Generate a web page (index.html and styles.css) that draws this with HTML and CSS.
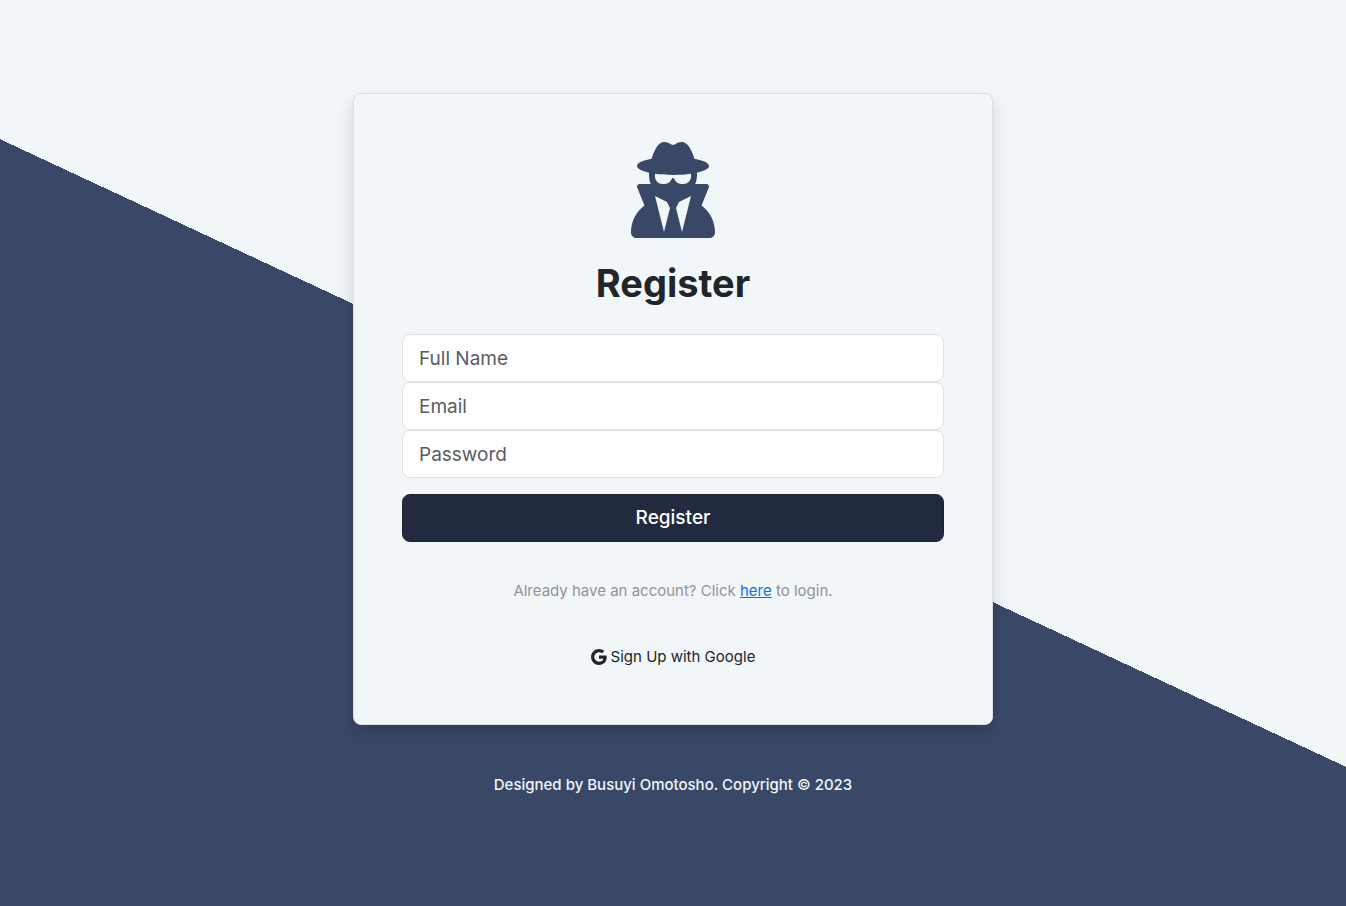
FILE: index.html
```
<!DOCTYPE html>
<html lang="en">
<head>
<meta charset="utf-8">
<meta name="viewport" content="width=device-width, initial-scale=1">
<title>Register</title>
<link rel="stylesheet" href="styles.css">
</head>
<body>
<div class="page">
  <main class="card">
    <svg class="logo" viewBox="0 0 448 512" aria-hidden="true"><path d="M224 16c-6.7 0-10.8-2.8-15.5-6.1C201.9 5.4 194 0 176 0c-30.5 0-52 43.7-66 89.4C62.7 98.1 32 112.2 32 128c0 14.3 25 27.1 64.6 35.9c-.4 4-.6 8-.6 12.1c0 17 3.3 33.2 9.3 48H45.4C38 224 32 230 32 237.4c0 1.7 .3 3.4 1 5l38.8 96.9C28.2 371.8 0 423.8 0 482.3C0 498.7 13.3 512 29.7 512H418.3c16.4 0 29.7-13.3 29.7-29.7c0-58.5-28.2-110.4-71.7-143L415 242.4c.6-1.6 1-3.3 1-5c0-7.4-6-13.4-13.4-13.4H342.7c6-14.8 9.3-31 9.3-48c0-4.1-.2-8.1-.6-12.1C391 155.1 416 142.3 416 128c0-15.8-30.7-29.9-78-38.6C324 43.7 302.5 0 272 0c-18 0-25.9 5.4-32.5 9.9c-4.8 3.3-8.8 6.1-15.5 6.1zm56 208H267.6c-16.5 0-31.1-10.6-36.3-26.2c-2.3-7-12.2-7-14.5 0c-5.2 15.6-19.9 26.2-36.3 26.2H168c-22.1 0-40-17.9-40-40V169.6c28.2 4.1 61 6.4 96 6.4s67.8-2.3 96-6.4V184c0 22.1-17.9 40-40 40zm-88 96l16 32L176 480 128 288l64 32zm128-32L272 480 240 352l16-32 64-32z"/></svg>
    <h1 class="title">Register</h1>
    <form class="form">
      <input class="field" type="text" name="name" placeholder="Full Name" aria-label="Full Name">
      <input class="field" type="email" name="email" placeholder="Email" aria-label="Email">
      <input class="field" type="password" name="password" placeholder="Password" aria-label="Password">
      <button class="submit" type="submit">Register</button>
    </form>
    <p class="hint">Already have an account? Click <a class="link" href="#login">here</a> to login.</p>
    <a class="google" href="#google">
      <svg class="google-icon" viewBox="0 0 16 16" aria-hidden="true"><path d="M15.545 6.558a9.42 9.42 0 0 1 .139 1.626c0 2.434-.87 4.492-2.384 5.885h.002C11.978 15.292 10.158 16 8 16A8 8 0 1 1 8 0a7.689 7.689 0 0 1 5.352 2.082l-2.284 2.284A4.347 4.347 0 0 0 8 3.166c-2.087 0-3.86 1.408-4.492 3.304a4.792 4.792 0 0 0 0 3.063h.003c.635 1.893 2.405 3.301 4.492 3.301 1.078 0 2.004-.276 2.722-.764h-.003a3.702 3.702 0 0 0 1.599-2.431H8v-3.08h7.545z"/></svg>
      <span>Sign Up with Google</span>
    </a>
  </main>
  <footer class="footer">Designed by Busuyi Omotosho. Copyright © 2023</footer>
</div>
</body>
</html>
```
FILE: styles.css
```
* {
  box-sizing: border-box;
}

body {
  margin: 0;
  font-family: Inter, "Liberation Sans", sans-serif;
  font-size: 15px;
  line-height: 24px;
  color: #212529;
}

.page {
  min-height: 100vh;
  display: flex;
  flex-direction: column;
  align-items: center;
  justify-content: center;
  gap: 48px;
  padding: 16px;
  background: linear-gradient(205deg, #f1f6f9 50%, #394867 50%);
}

.card {
  width: 100%;
  max-width: 640px;
  display: flex;
  flex-direction: column;
  align-items: center;
  padding: 48px;
  background: #f1f6f9;
  border: 1px solid #dadfe2;
  border-radius: 8px;
  box-shadow: 0 8px 16px rgba(0, 0, 0, 0.15);
}

.logo {
  height: 96px;
  fill: #394867;
}

.title {
  margin: 21px 0 27px;
  font-size: 38px;
  font-weight: 700;
  line-height: 48px;
}

.form {
  width: 100%;
  display: flex;
  flex-direction: column;
}

.field {
  width: 100%;
  height: 48px;
  padding: 8px 16px;
  font: inherit;
  font-size: 19px;
  color: #212529;
  background: #fff;
  border: 1px solid #dee2e6;
  border-radius: 8px;
}

.field::placeholder {
  color: #595c5f;
  opacity: 1;
}

.submit {
  height: 48px;
  margin-top: 16px;
  font: inherit;
  font-size: 19px;
  font-weight: 500;
  color: #fff;
  background: #212a3e;
  border: 1px solid #212529;
  border-radius: 8px;
}

.hint {
  margin: 37px 0 35px;
  color: #909497;
}

.link {
  color: #0d6efd;
}

.google {
  display: flex;
  align-items: center;
  gap: 4px;
  padding: 7px 12px;
  color: #212529;
  text-decoration: none;
}

.google-icon {
  width: 16px;
  height: 16px;
  fill: #212529;
}

.footer {
  margin-bottom: 16px;
  font-weight: 500;
  color: #f1f6f9;
}
```
